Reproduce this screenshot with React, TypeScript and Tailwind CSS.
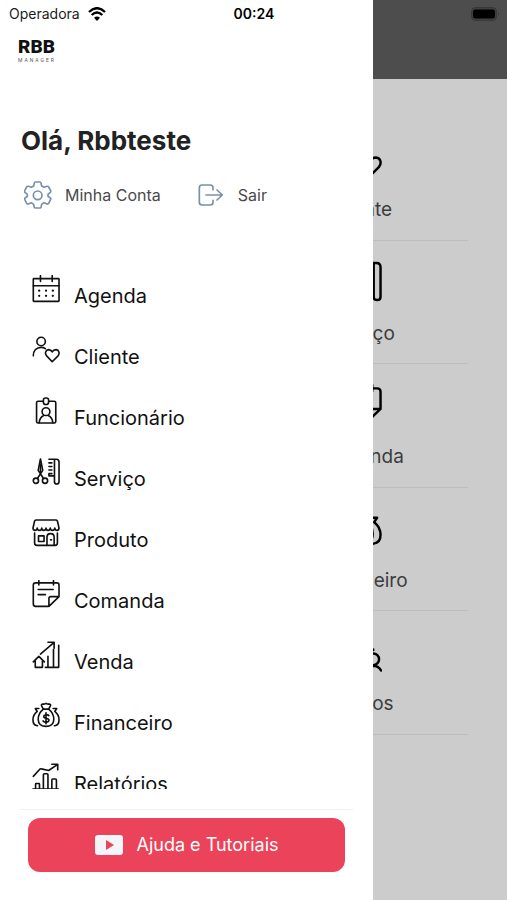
import type { ReactNode } from "react";

type IconName =
  | "agenda"
  | "cliente"
  | "funcionario"
  | "servico"
  | "produto"
  | "comanda"
  | "venda"
  | "financeiro"
  | "relatorios"
  | "grupos";

const drawings: Record<IconName, ReactNode> = {
  agenda: (
    <>
      <rect x="3" y="10" width="79" height="70" rx="2" />
      <path d="M3 32H82M25 1V19M61 1V19" />
      <path
        d="M21 47H21.1M42 47H42.1M63 47H63.1M21 63H21.1M42 63H42.1M63 63H63.1"
        strokeWidth="7"
      />
    </>
  ),
  cliente: (
    <>
      <circle cx="27" cy="16" r="13" />
      <path d="M3 60C3 44 13 34 27 34C32 34 36 35 40 38" />
      <path d="M61 78L44 60C37 52 41 42 50 41C56 41 59 44 61 48C63 44 67 41 73 41C82 42 85 52 79 60Z" />
    </>
  ),
  funcionario: (
    <>
      <path d="M33 12H18Q13 12 13 17V74Q13 79 18 79H67Q72 79 72 74V17Q72 12 67 12H51" />
      <rect x="34" y="2" width="16" height="20" rx="7" />
      <circle cx="42" cy="44" r="12" />
      <path d="M21 78C22 68 27 60 35 56M63 78C62 68 57 60 49 56" />
    </>
  ),
  servico: (
    <>
      <path d="M25 2L18 37L34 61M25 2L32 37L16 61" />
      <path d="M25 20V44" />
      <circle cx="11" cy="69" r="8" />
      <circle cx="39" cy="69" r="8" />
      <path d="M51 3H74Q82 3 82 12V72Q82 79 75 79Q68 79 68 72V4M68 54H51V47M51 14H60M51 25H60M51 36H60M51 47H60" />
    </>
  ),
  produto: (
    <>
      <path d="M11 2H73Q76 2 77 5L82 27Q82 34 76 34Q70 34 69 27Q68 34 62 34Q56 34 55 27Q54 34 48 34Q42 34 42 27Q41 34 35 34Q29 34 29 27Q28 34 22 34Q16 34 15 27Q14 34 8 34Q2 34 2 27L7 5Q8 2 11 2Z" />
      <path d="M7 42V73Q7 80 14 80H70Q77 80 77 73V42" />
      <rect x="19" y="51" width="17" height="17" />
      <path d="M45 80V55Q45 44 56 44Q67 44 67 55V80M56 63H59" />
    </>
  ),
  comanda: (
    <>
      <path d="M48 80H10Q3 80 3 73V15Q3 8 10 8H75Q82 8 82 15V50L51 80V56Q51 50 57 50H82M20 1V14M65 1V14M18 28H64M18 44H40" />
    </>
  ),
  venda: (
    <>
      <path d="M25 39L66 4M48 3H67V21M48 46V80M65 25V80M81 12V80H40" />
      <path d="M3 63L20 46L37 63M9 60V80H31V60" />
    </>
  ),
  financeiro: (
    <>
      <path d="M34 21C24 29 18 40 18 52C18 66 28 74 42 74C56 74 66 66 66 52C66 40 60 29 50 21Z" />
      <path d="M34 21L28 10Q27 6 31 5Q36 7 42 3Q48 7 53 5Q57 6 56 10L50 21" />
      <path d="M20 19H9L15 28C6 35 2 44 2 54C2 64 7 71 16 72M64 19H75L69 28C78 35 82 44 82 54C82 64 77 71 68 72" />
      <path d="M51 41C48 37 36 36 35 43C34 51 51 47 51 55C50 63 37 62 33 57M42 32V66" />
    </>
  ),
  relatorios: (
    <>
      <path d="M3 40L23 18Q25 16 28 17L50 22L77 4M60 3H78V20" />
      <path d="M2 79H80M10 79V64Q10 62 12 62H20Q22 62 22 64V79M34 79V35Q34 32 37 32H45Q48 32 48 35V79M60 79V51Q60 48 63 48H71Q74 48 74 51V79" />
    </>
  ),
  grupos: (
    <>
      <circle cx="17" cy="57" r="12" />
      <circle cx="67" cy="57" r="12" />
      <path d="M0 80Q5 71 17 71Q29 71 34 80M50 80Q54 71 66 70Q78 70 83 80M67 37V38M42 20V40" />
    </>
  ),
};

function Icon({ name, className }: { name: IconName; className: string }) {
  return (
    <svg
      viewBox="-1 -1 86 86"
      className={className}
      fill="none"
      stroke="currentColor"
      strokeWidth="5"
      strokeLinecap="round"
      strokeLinejoin="round"
      aria-hidden="true"
    >
      {drawings[name]}
    </svg>
  );
}

const menu: { icon: IconName; label: string }[] = [
  { icon: "agenda", label: "Agenda" },
  { icon: "cliente", label: "Cliente" },
  { icon: "funcionario", label: "Funcionário" },
  { icon: "servico", label: "Serviço" },
  { icon: "produto", label: "Produto" },
  { icon: "comanda", label: "Comanda" },
  { icon: "venda", label: "Venda" },
  { icon: "financeiro", label: "Financeiro" },
  { icon: "relatorios", label: "Relatórios" },
];

const tiles: { icon: IconName; label: string }[] = [
  { icon: "cliente", label: "Cliente" },
  { icon: "servico", label: "Serviço" },
  { icon: "comanda", label: "Comanda" },
  { icon: "financeiro", label: "Financeiro" },
  { icon: "grupos", label: "Grupos" },
];

function StatusBar() {
  return (
    <div className="absolute inset-x-0 top-0 z-20 grid h-7 grid-cols-3 items-center pr-2 pl-[9px] text-sm leading-5 text-[#1c1c1c]">
      <div className="flex items-center gap-2">
        <span>Operadora</span>
        <svg viewBox="0 0 54 42" className="h-3.5 w-[18px] text-black" fill="currentColor" aria-label="Wi-Fi">
          <path d="M27 42L18 32Q27 25 36 32Z" />
          <path
            d="M3 15Q27 -8 51 15M11 24Q27 9 43 24"
            fill="none"
            stroke="currentColor"
            strokeWidth="7"
          />
        </svg>
      </div>
      <span className="text-center font-semibold text-black">00:24</span>
      <svg viewBox="0 0 28 14" className="h-3.5 w-7 justify-self-end" aria-label="Bateria">
        <rect x="0.5" y="0.5" width="25" height="13" rx="4" fill="#404040" stroke="#383838" />
        <rect x="2" y="2.5" width="22" height="9" rx="2.5" fill="#000000" />
        <path d="M27 5Q28.5 7 27 9Z" fill="#333333" />
      </svg>
    </div>
  );
}

function Home() {
  return (
    <main className="min-h-screen bg-[#cccccc]" aria-hidden="true">
      <div className="h-[79px] bg-[#4d4d4d]" />
      <div className="px-[39px] pt-[38px]">
        <ul className="ml-auto grid h-[618px] w-1/2 grid-rows-5">
          {tiles.map((tile) => (
            <li
              key={tile.label}
              className="flex flex-col items-center gap-[19px] border-b border-[#bdbdbd] pt-5"
            >
              <Icon name={tile.icon} className="size-[42px] text-black" />
              <span className="text-[19px] leading-6 text-[#3c3c3c]">{tile.label}</span>
            </li>
          ))}
        </ul>
      </div>
    </main>
  );
}

function Drawer() {
  return (
    <aside className="absolute inset-y-0 left-0 z-10 flex w-[calc(100%-134px)] flex-col bg-white">
      <header className="px-[18px] pt-[37px]">
        <div className="flex flex-col items-start font-['Roboto',sans-serif]">
          <span className="text-[19px] leading-5 font-black text-[#111111]">RBB</span>
          <span className="text-[5px] leading-[6px] tracking-[2px] text-[#555555]">MANAGER</span>
        </div>
        <h1 className="mt-[62px] ml-[3px] text-[26px] leading-8 font-bold text-[#222222]">
          Olá, Rbbteste
        </h1>
      </header>

      <div className="mt-6 flex gap-9 px-6 text-base leading-7 text-[#4a4a4a]">
        <button type="button" className="flex items-center gap-[13px]">
          <svg
            viewBox="0 0 84 84"
            className="size-7 text-[#7a8fac]"
            fill="none"
            stroke="currentColor"
            strokeWidth="5"
            strokeLinejoin="round"
            aria-hidden="true"
          >
            <path d="M34 3H48Q50 3 51 6L53 15L60 19L69 16Q72 15 74 18L80 29Q81 32 79 34L72 40V46L79 51Q81 53 80 55L74 67Q72 70 69 69L60 65L53 70L51 79Q50 81 48 81H34Q32 81 31 79L29 70L22 65L13 69Q10 70 8 67L2 55Q1 53 3 51L10 46V40L3 34Q1 32 2 29L8 18Q10 15 13 16L22 19L29 15L31 6Q32 3 34 3Z" />
            <circle cx="41" cy="43" r="13" />
          </svg>
          Minha Conta
        </button>
        <button type="button" className="flex items-center gap-[13px]">
          <svg
            viewBox="-3 0 84 84"
            className="size-7 text-[#7a8fac]"
            fill="none"
            stroke="currentColor"
            strokeWidth="5"
            strokeLinecap="round"
            strokeLinejoin="round"
            aria-hidden="true"
          >
            <path d="M45 26V20Q45 12 37 12H12Q4 12 4 20V64Q4 72 12 72H37Q45 72 45 64V58M24 42H72M57 27L73 42L57 57" />
          </svg>
          Sair
        </button>
      </div>

      <nav className="mt-[50px] min-h-0 flex-1 overflow-hidden" aria-label="Menu principal">
        <ul>
          {menu.map((item) => (
            <li key={item.label}>
              <a
                href={`#${item.icon}`}
                className="flex h-[61px] items-end gap-3.5 px-8 pb-3 text-xl leading-6 text-[#111111]"
              >
                <Icon name={item.icon} className="mb-[5px] size-7" />
                {item.label}
              </a>
            </li>
          ))}
        </ul>
      </nav>

      <footer className="mx-5 mt-5 border-t border-[#f1f1f1] px-2 pt-2 pb-7">
        <button
          type="button"
          className="flex h-[54px] w-full items-center justify-center gap-3.5 rounded-xl bg-[#eb445a] text-lg text-white"
        >
          <svg viewBox="0 0 28 22" className="h-[22px] w-7" aria-hidden="true">
            <rect y="1" width="28" height="20" rx="3" fill="#f4f5f8" />
            <path d="M11 6L19 11L11 16Z" fill="#eb445a" />
          </svg>
          Ajuda e Tutoriais
        </button>
      </footer>
    </aside>
  );
}

export default function App() {
  return (
    <div className="relative min-h-screen overflow-hidden font-['Inter',sans-serif]">
      <StatusBar />
      <Home />
      <Drawer />
    </div>
  );
}
